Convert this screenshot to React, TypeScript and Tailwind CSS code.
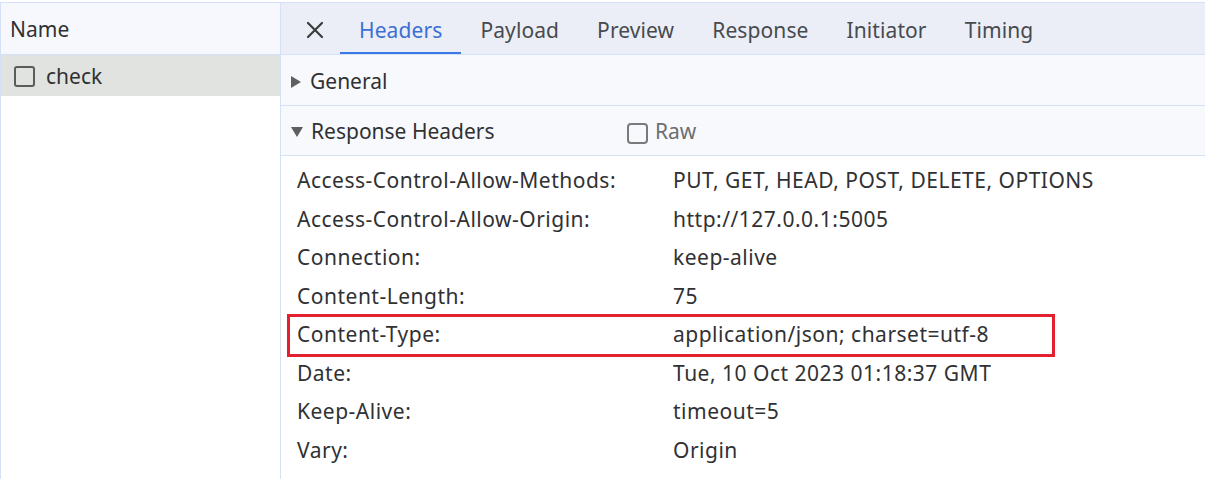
import React from "react";

const rows: [string, string][] = [
  ["Access-Control-Allow-Methods:", "PUT, GET, HEAD, POST, DELETE, OPTIONS"],
  ["Access-Control-Allow-Origin:", "http://127.0.0.1:5005"],
  ["Connection:", "keep-alive"],
  ["Content-Length:", "75"],
  ["Content-Type:", "application/json; charset=utf-8"],
  ["Date:", "Tue, 10 Oct 2023 01:18:37 GMT"],
  ["Keep-Alive:", "timeout=5"],
  ["Vary:", "Origin"],
];

const tabs = ["Headers", "Payload", "Preview", "Response", "Initiator", "Timing"];

export default function App() {
  return (
    <div
      className="w-[1205px] h-[479px] overflow-hidden bg-white text-[21px] text-[#303133] pt-[2px]"
      style={{ fontFamily: '"Noto Sans", "Open Sans", sans-serif' }}
    >
      <div className="flex h-full border-t border-l border-[#d5e1f7]">
        {/* Left panel */}
        <div className="w-[280px] shrink-0 flex flex-col border-r border-[#d5e1f7]">
          <div className="h-[52px] flex items-center pl-[9px] pt-[2px] bg-[#f6f8fd] border-b border-[#d5e1f7] text-[#303133]">
            Name
          </div>
          <div className="h-[41px] flex items-center pl-[13px] pt-[2px] bg-[#e1e3e0]">
            <span className="w-[21px] h-[21px] border-2 border-[#5b5b5b] rounded-[3px] mr-[11px]" />
            <span className="text-[#303133]">check</span>
          </div>
        </div>
        {/* Right panel */}
        <div className="flex-1 flex flex-col">
          <div className="h-[52px] flex items-stretch bg-[#ebeef6] border-b border-[#d5e1f7] tracking-[0.1px]">
            <div className="w-[59px] flex items-center justify-center pl-[8px] pt-[2px]">
              <svg width="20" height="20" viewBox="0 0 20 20">
                <path d="M3 3 L17 17 M17 3 L3 17" stroke="#3c3c3c" strokeWidth="2.2" strokeLinecap="round" />
              </svg>
            </div>
            {tabs.map((t, i) => (
              <div
                key={t}
                className={
                  "flex items-center px-[19px] " +
                  (i === 0
                    ? "text-[#3b6fd6] border-b-2 border-[#3b78e7] pt-[6px]"
                    : "text-[#474a4e] pt-[4px]")
                }
              >
                {t}
              </div>
            ))}
          </div>
          <div className="h-[51px] flex items-center pl-[10px] pt-[4px] bg-[#f8f9fd] border-b border-[#d5e1f7]">
            <svg width="10" height="12" viewBox="0 0 10 12" className="mr-[9px]">
              <path d="M0 0 L10 6 L0 12 Z" fill="#5f5f5f" />
            </svg>
            <span>General</span>
          </div>
          <div className="h-[50px] flex items-center pl-[10px] pt-[2px] bg-[#f8f9fd] border-b border-[#d5e1f7]">
            <svg width="12" height="10" viewBox="0 0 12 10" className="mr-[8px]">
              <path d="M0 0 L12 0 L6 10 Z" fill="#5f5f5f" />
            </svg>
            <span className="w-[316px]">Response Headers</span>
            <span className="w-[21px] h-[21px] border-2 border-[#7a7a7a] rounded-[4px] mr-[7px] mt-[3px]" />
            <span className="text-[#6b6e73]">Raw</span>
          </div>
          <div className="flex flex-col pt-[6px] tracking-[0.5px]">
            {rows.map(([k, v], i) =>
              i === 4 ? (
                <div
                  key={k}
                  className="ml-[6px] w-[768px] h-[43px] border-[3px] border-[#e5202e] flex items-center pl-[7px] -my-[2px]"
                >
                  <span className="w-[376px] shrink-0">{k}</span>
                  <span>{v}</span>
                </div>
              ) : (
                <div key={k} className="h-[38.4px] flex items-center pl-[16px]">
                  <span className="w-[376px] shrink-0">{k}</span>
                  <span>{v}</span>
                </div>
              )
            )}
          </div>
        </div>
      </div>
    </div>
  );
}
